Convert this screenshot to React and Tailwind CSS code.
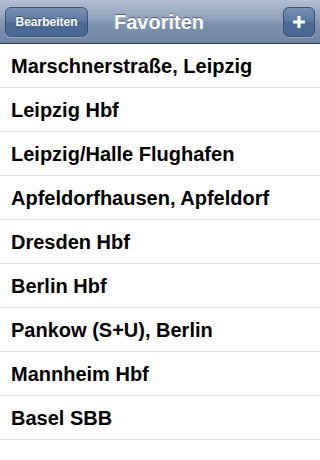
const favorites = [
  'Marschnerstraße, Leipzig',
  'Leipzig Hbf',
  'Leipzig/Halle Flughafen',
  'Apfeldorfhausen, Apfeldorf',
  'Dresden Hbf',
  'Berlin Hbf',
  'Pankow (S+U), Berlin',
  'Mannheim Hbf',
  'Basel SBB',
];

export default function App() {
  return (
    <div className="w-[320px] h-[460px] bg-white overflow-hidden font-['Liberation_Sans',Arial,sans-serif]">
      <div className="h-[44px] flex items-center px-[5px] border-b border-[#2d3642] bg-[linear-gradient(#b3bfd0,#8a9db5_50%,#8196b0_50%,#6d83a2)]">
        <div className="flex-1 flex">
          <button
            type="button"
            className="w-[83px] h-[30px] rounded-[6px] border border-[#3b4f6e] bg-[linear-gradient(#7891b4,#5a76a0_50%,#4c6a96_50%,#4a6894)] text-white text-[12px] font-bold [text-shadow:0_-1px_0_rgba(0,0,0,0.4)] shadow-[0_1px_0_rgba(255,255,255,0.3)]"
          >
            Bearbeiten
          </button>
        </div>
        <h1 className="text-white text-[20px] font-bold [text-shadow:0_-1px_0_rgba(0,0,0,0.45)] -ml-[2px]">Favoriten</h1>
        <div className="flex-1 flex justify-end">
          <button
            type="button"
            className="w-[32px] h-[30px] rounded-[6px] border border-[#3b4f6e] bg-[linear-gradient(#7891b4,#5a76a0_50%,#4c6a96_50%,#4a6894)] flex items-center justify-center shadow-[0_1px_0_rgba(255,255,255,0.3)]"
          >
            <svg width="14" height="14" viewBox="0 0 14 14">
              <path d="M7 1v12M1 7h12" stroke="white" strokeWidth="3.2" />
            </svg>
          </button>
        </div>
      </div>
      <ul>
        {favorites.map((name) => (
          <li key={name} className="h-[44px] flex items-center pl-[11px] border-b border-[#e0e0e0] text-[20px] font-bold text-black">
            {name}
          </li>
        ))}
      </ul>
    </div>
  );
}
